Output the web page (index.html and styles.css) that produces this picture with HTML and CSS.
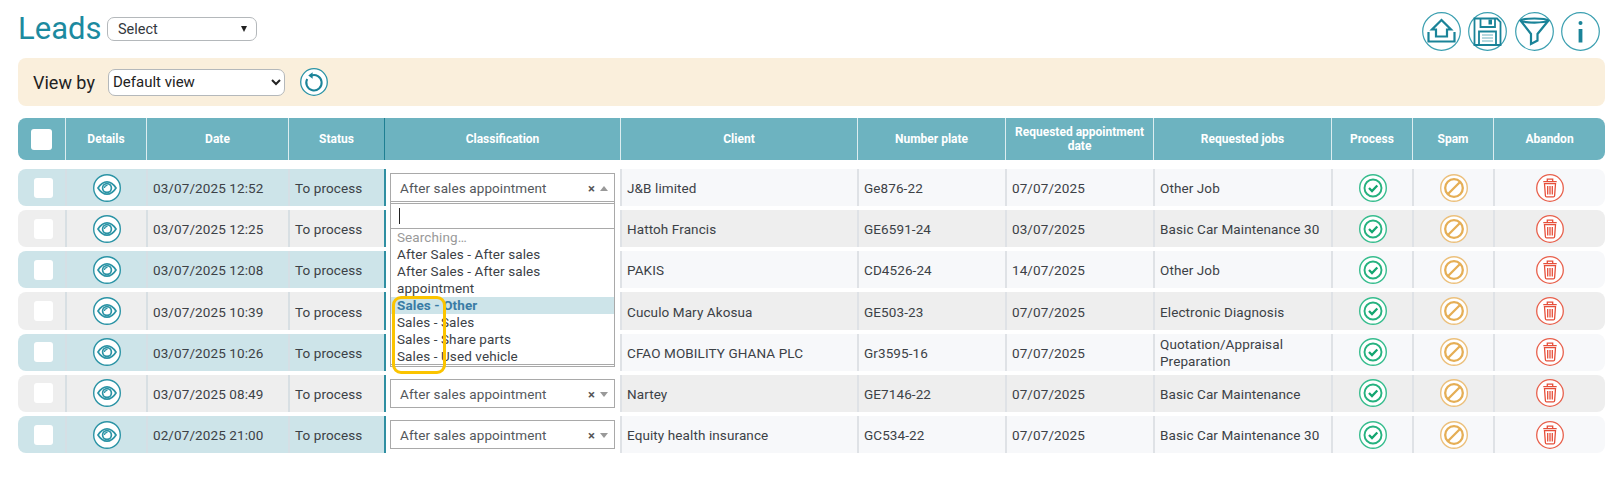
FILE: index.html
```html
<!DOCTYPE html>
<html lang="en">
<head>
<meta charset="utf-8">
<title>Leads</title>
<link rel="stylesheet" href="styles.css">
</head>
<body>
<svg class="defs" aria-hidden="true">
  <symbol id="i-eye" viewBox="0 0 28 28">
    <circle cx="14" cy="14" r="13.300" fill="#fff" stroke="#2a93a5" stroke-width="1.400"/>
    <path d="M5 14C8 9.200 11 7.800 14 7.800S20 9.200 23 14C20 18.800 17 20.200 14 20.200S8 18.800 5 14Z" fill="none" stroke="#2a93a5" stroke-width="1.700"/>
    <circle cx="14" cy="14" r="4.400" fill="none" stroke="#2a93a5" stroke-width="1.700"/>
    <path d="M11.500 14A2.800 2.800 0 0 1 14.500 11.300" fill="none" stroke="#2a93a5" stroke-width="1.200"/>
  </symbol>
  <symbol id="i-check" viewBox="0 0 28 28">
    <circle cx="14" cy="14" r="13.300" fill="#fff" stroke="#37bd8e" stroke-width="1.400"/>
    <circle cx="14" cy="14" r="8.500" fill="none" stroke="#25b27f" stroke-width="1.900"/>
    <path d="M10 14l3 3 5.300-5.500" fill="none" stroke="#12a56f" stroke-width="2.300"/>
  </symbol>
  <symbol id="i-ban" viewBox="0 0 28 28">
    <circle cx="14" cy="14" r="13.300" fill="#fff" stroke="#ecc07c" stroke-width="1.400"/>
    <circle cx="14" cy="14" r="8.800" fill="none" stroke="#e5ae55" stroke-width="2.300"/>
    <path d="M8 20L20 8" fill="none" stroke="#e5ae55" stroke-width="2.300"/>
  </symbol>
  <symbol id="i-trash" viewBox="0 0 28 28">
    <circle cx="14" cy="14" r="13.300" fill="#fff" stroke="#e8604c" stroke-width="1.300"/>
    <path d="M7.300 7.700H20.700M11.300 7.300V5.200H16.700V7.300M8.500 9.700H19.500L18.600 21.700Q18.500 22.800 17.400 22.800H10.600Q9.500 22.800 9.400 21.700ZM11.700 12V20.500M14 12V20.500M16.300 12V20.500" fill="none" stroke="#e64f3a" stroke-width="1.300"/>
  </symbol>
  <symbol id="i-home" viewBox="0 0 39 39">
    <circle cx="19.500" cy="19.500" r="18.800" fill="#fff" stroke="#3b9fb0" stroke-width="1.200"/>
    <path d="M19.500 8L10 17.500H14V24.500H25V17.500H29ZM6.500 20V29.500H32.500V20" fill="none" stroke="#1a8398" stroke-width="2.200"/>
  </symbol>
  <symbol id="i-save" viewBox="0 0 39 39">
    <circle cx="19.500" cy="19.500" r="18.800" fill="#fff" stroke="#3b9fb0" stroke-width="1.200"/>
    <path d="M6.500 6.500H29L32.500 10V33H6.500ZM12.500 6.500V15H27V6.500M11 33V19.500H28V33" fill="none" stroke="#1a8398" stroke-width="1.800"/>
    <path d="M20.500 7.500H24V12.500H20.500Z" fill="#1a8398"/>
    <path d="M14 23H25M14 26H25M14 29H25" fill="none" stroke="#6db3c0" stroke-width="1"/>
  </symbol>
  <symbol id="i-filter" viewBox="0 0 39 39">
    <circle cx="19.500" cy="19.500" r="18.800" fill="#fff" stroke="#3b9fb0" stroke-width="1.200"/>
    <path d="M5.500 8.500C9 5.800 30 5.800 33.500 8.500C30 11.200 9 11.200 5.500 8.500ZM5.500 8.500L16 22V32L22.500 28.500V22L33.500 8.500" fill="none" stroke="#1a8398" stroke-width="2.200"/>
  </symbol>
  <symbol id="i-info" viewBox="0 0 39 39">
    <circle cx="19.500" cy="19.500" r="18.800" fill="#fff" stroke="#3b9fb0" stroke-width="1.200"/>
    <circle cx="19.500" cy="11" r="2" fill="#1a8398"/>
    <path d="M19.500 17V30.500" fill="none" stroke="#1a8398" stroke-width="3.800"/>
  </symbol>
  <symbol id="i-refresh" viewBox="0 0 28 28">
    <circle cx="14" cy="14" r="13.300" fill="#fff" stroke="#2a93a5" stroke-width="1.300"/>
    <path d="M11 7.600A7.700 7.700 0 1 1 7.200 11" fill="none" stroke="#1a8398" stroke-width="2"/>
    <path d="M12.600 4.300V10.800L8.300 7.600Z" fill="#1a8398"/>
  </symbol>
</svg>

<header class="topbar">
  <div class="title-group">
    <h1 class="title">Leads</h1>
    <div class="fake-select"><span>Select</span><span class="fake-caret"></span></div>
  </div>
  <div class="tools">
    <svg class="tool"><use href="#i-home"/></svg>
    <svg class="tool"><use href="#i-save"/></svg>
    <svg class="tool"><use href="#i-filter"/></svg>
    <svg class="tool"><use href="#i-info"/></svg>
  </div>
</header>

<section class="viewbar">
  <label class="view-label" for="view">View by</label>
  <select class="view-select" id="view"><option>Default view</option></select>
  <svg class="refresh"><use href="#i-refresh"/></svg>
</section>

<section class="table">
  <div class="grid head">
    <div class="hc first"><span class="head-box"></span></div>
    <div class="hc">Details</div>
    <div class="hc">Date</div>
    <div class="hc">Status</div>
    <div class="hc classif">Classification</div>
    <div class="hc">Client</div>
    <div class="hc">Number plate</div>
    <div class="hc">Requested appointment date</div>
    <div class="hc">Requested jobs</div>
    <div class="hc">Process</div>
    <div class="hc">Spam</div>
    <div class="hc">Abandon</div>
  </div>

  <div class="rows">
    <div class="grid row teal">
      <div class="c lead first"><span class="box"></span></div>
      <div class="c lead mid"><svg class="ico"><use href="#i-eye"/></svg></div>
      <div class="c lead">03/07/2025 12:52</div>
      <div class="c lead">To process</div>
      <div class="c classif">
        <div class="s2 open"><span class="s2-text">After sales appointment</span><span class="s2-x">×</span><span class="s2-arrow"></span></div>
        <div class="drop">
          <div class="drop-search"><span class="cursor"></span></div>
          <ul class="drop-list">
            <li class="muted">Searching…</li>
            <li>After Sales - After sales</li>
            <li>After Sales - After sales appointment</li>
            <li class="active">Sales - Other</li>
            <li>Sales - Sales</li>
            <li>Sales - Share parts</li>
            <li>Sales - Used vehicle</li>
          </ul>
          <div class="mark"></div>
        </div>
      </div>
      <div class="c">J&amp;B limited</div>
      <div class="c">Ge876-22</div>
      <div class="c">07/07/2025</div>
      <div class="c">Other Job</div>
      <div class="c mid"><svg class="ico"><use href="#i-check"/></svg></div>
      <div class="c mid"><svg class="ico"><use href="#i-ban"/></svg></div>
      <div class="c mid last"><svg class="ico"><use href="#i-trash"/></svg></div>
    </div>

    <div class="grid row grey">
      <div class="c lead first"><span class="box"></span></div>
      <div class="c lead mid"><svg class="ico"><use href="#i-eye"/></svg></div>
      <div class="c lead">03/07/2025 12:25</div>
      <div class="c lead">To process</div>
      <div class="c classif"><div class="s2"></div></div>
      <div class="c">Hattoh Francis</div>
      <div class="c">GE6591-24</div>
      <div class="c">03/07/2025</div>
      <div class="c">Basic Car Maintenance 30</div>
      <div class="c mid"><svg class="ico"><use href="#i-check"/></svg></div>
      <div class="c mid"><svg class="ico"><use href="#i-ban"/></svg></div>
      <div class="c mid last"><svg class="ico"><use href="#i-trash"/></svg></div>
    </div>

    <div class="grid row teal">
      <div class="c lead first"><span class="box"></span></div>
      <div class="c lead mid"><svg class="ico"><use href="#i-eye"/></svg></div>
      <div class="c lead">03/07/2025 12:08</div>
      <div class="c lead">To process</div>
      <div class="c classif"><div class="s2"></div></div>
      <div class="c">PAKIS</div>
      <div class="c">CD4526-24</div>
      <div class="c">14/07/2025</div>
      <div class="c">Other Job</div>
      <div class="c mid"><svg class="ico"><use href="#i-check"/></svg></div>
      <div class="c mid"><svg class="ico"><use href="#i-ban"/></svg></div>
      <div class="c mid last"><svg class="ico"><use href="#i-trash"/></svg></div>
    </div>

    <div class="grid row grey">
      <div class="c lead first"><span class="box"></span></div>
      <div class="c lead mid"><svg class="ico"><use href="#i-eye"/></svg></div>
      <div class="c lead">03/07/2025 10:39</div>
      <div class="c lead">To process</div>
      <div class="c classif"><div class="s2"></div></div>
      <div class="c">Cuculo Mary Akosua</div>
      <div class="c">GE503-23</div>
      <div class="c">07/07/2025</div>
      <div class="c">Electronic Diagnosis</div>
      <div class="c mid"><svg class="ico"><use href="#i-check"/></svg></div>
      <div class="c mid"><svg class="ico"><use href="#i-ban"/></svg></div>
      <div class="c mid last"><svg class="ico"><use href="#i-trash"/></svg></div>
    </div>

    <div class="grid row teal">
      <div class="c lead first"><span class="box"></span></div>
      <div class="c lead mid"><svg class="ico"><use href="#i-eye"/></svg></div>
      <div class="c lead">03/07/2025 10:26</div>
      <div class="c lead">To process</div>
      <div class="c classif"><div class="s2"></div></div>
      <div class="c">CFAO MOBILITY GHANA PLC</div>
      <div class="c">Gr3595-16</div>
      <div class="c">07/07/2025</div>
      <div class="c">Quotation/Appraisal Preparation</div>
      <div class="c mid"><svg class="ico"><use href="#i-check"/></svg></div>
      <div class="c mid"><svg class="ico"><use href="#i-ban"/></svg></div>
      <div class="c mid last"><svg class="ico"><use href="#i-trash"/></svg></div>
    </div>

    <div class="grid row grey">
      <div class="c lead first"><span class="box"></span></div>
      <div class="c lead mid"><svg class="ico"><use href="#i-eye"/></svg></div>
      <div class="c lead">03/07/2025 08:49</div>
      <div class="c lead">To process</div>
      <div class="c classif"><div class="s2"><span class="s2-text">After sales appointment</span><span class="s2-x">×</span><span class="s2-arrow"></span></div></div>
      <div class="c">Nartey</div>
      <div class="c">GE7146-22</div>
      <div class="c">07/07/2025</div>
      <div class="c">Basic Car Maintenance</div>
      <div class="c mid"><svg class="ico"><use href="#i-check"/></svg></div>
      <div class="c mid"><svg class="ico"><use href="#i-ban"/></svg></div>
      <div class="c mid last"><svg class="ico"><use href="#i-trash"/></svg></div>
    </div>

    <div class="grid row teal">
      <div class="c lead first"><span class="box"></span></div>
      <div class="c lead mid"><svg class="ico"><use href="#i-eye"/></svg></div>
      <div class="c lead">02/07/2025 21:00</div>
      <div class="c lead">To process</div>
      <div class="c classif"><div class="s2"><span class="s2-text">After sales appointment</span><span class="s2-x">×</span><span class="s2-arrow"></span></div></div>
      <div class="c">Equity health insurance</div>
      <div class="c">GC534-22</div>
      <div class="c">07/07/2025</div>
      <div class="c">Basic Car Maintenance 30</div>
      <div class="c mid"><svg class="ico"><use href="#i-check"/></svg></div>
      <div class="c mid"><svg class="ico"><use href="#i-ban"/></svg></div>
      <div class="c mid last"><svg class="ico"><use href="#i-trash"/></svg></div>
    </div>
  </div>
</section>
</body>
</html>
```

FILE: styles.css
```css
* { box-sizing: border-box; }
html, body { margin: 0; background: #fff; }
body {
  padding: 12px 14px 0 18px;
  font-family: Roboto, "Liberation Sans", sans-serif;
  font-size: 13.500px;
  letter-spacing: 0.1px;
  color: #3c4146;
  overflow: hidden;
}
.defs { width: 0; height: 0; position: absolute; }

.topbar { display: flex; justify-content: space-between; height: 39px; padding-right: 5px; }
.title-group { display: flex; align-items: center; gap: 0; height: 34px; }
.title { width: 89px; margin: 0; font-size: 31px; font-weight: 400; letter-spacing: 0; color: #1c8a9f; line-height: 34px; }
.fake-select {
  display: flex; align-items: center; justify-content: space-between;
  width: 150px; height: 24px; padding: 0 9px 0 10px;
  border: 1px solid #b4b8bb; border-radius: 7px;
  font-size: 14.500px; letter-spacing: 0; color: #33383d;
}
.fake-caret { width: 0; height: 0; border: 3.500px solid transparent; border-top: 6px solid #222; border-bottom: 0; }
.tools { display: flex; gap: 7.500px; }
.tool { width: 39px; height: 39px; }

.viewbar {
  display: flex; align-items: center; height: 48px; margin-top: 7px; padding-left: 15px;
  background: #faefdc; border-radius: 8px;
}
.view-label { width: 75px; padding-top: 1px; font-size: 18px; letter-spacing: 0; color: #222; }
.view-select {
  width: 177px; height: 27px; padding: 0; background: #fff;
  border: 1px solid #b4b8bb; border-radius: 7px;
  font-family: Roboto, "Liberation Sans", sans-serif; font-size: 15px; letter-spacing: 0; color: #222;
}
.refresh { width: 28px; height: 28px; margin-left: 15px; }

.table { margin-top: 12px; }
.grid {
  display: grid;
  grid-template-columns: 47px 81px 142px 96px 236px 237px 148px 148px 178px 81px 81px 112px;
}
.head { height: 42px; background: #6db3c0; border-radius: 8px; color: #fff; font-weight: 700; font-size: 12px; letter-spacing: 0; }
.hc {
  display: flex; align-items: center; justify-content: center; text-align: center;
  padding: 0 8px; line-height: 14.500px; border-left: 1px solid #dcedf0;
}
.hc.first { border-left: 0; }
.hc.classif { border-left: 1px solid #1f7f92; }
.head-box { width: 21px; height: 21px; background: #fff; border-radius: 3px; }

.rows { display: flex; flex-direction: column; gap: 4px; margin-top: 9px; }
.row { height: 37.170px; }
.c {
  display: flex; align-items: center; min-width: 0; padding: 2px 5px 0; line-height: 17px;
  border-left: 2px solid #dfe2e6;
}
.teal .c { background: #f7f8fa; }
.grey .c { background: #eeeeee; }
.teal .lead { background: #cde4e9; border-left-color: #d5dfe5; }
.grey .lead { border-left-color: #d8dfe3; }
.c.first { border-left: 0; border-radius: 8px 0 0 8px; padding: 0 0 0 16px; }
.c.last { border-radius: 0 8px 8px 0; }
.c.mid { justify-content: center; padding: 0; }
.teal .c.classif, .grey .c.classif { position: relative; background: #fff; padding: 0 5px 0 4px; border-left-color: #2f8fa2; }
.box { width: 19px; height: 20px; background: #fff; border-radius: 3px; }
.ico { width: 28px; height: 28px; }

.s2 {
  display: flex; align-items: center; width: 100%; height: 29px; padding: 2px 6px 0 9px;
  background: #fff; border: 1px solid #a9a9a9; color: #54585c;
}
.s2-text { flex: 1; white-space: nowrap; }
.s2-x { font-weight: 700; font-size: 13px; color: #555; margin-right: 5px; }
.s2-arrow { width: 0; height: 0; border: 4px solid transparent; border-top: 5px solid #999; border-bottom: 0; }
.open .s2-arrow { border-top: 0; border-bottom: 5px solid #999; }

.drop {
  position: absolute; z-index: 5; left: 4px; top: 33px; width: 225px; height: 163px;
  background: #fff; border: 1px solid #a9a9a9; border-top: 0;
}
.drop-search { height: 26px; margin: 1px 0 0; border: 1px solid #a9a9a9; border-width: 1px 0; display: flex; align-items: center; padding-left: 8px; }
.cursor { width: 1px; height: 16px; background: #222; }
.drop-list { list-style: none; margin: 0; padding: 0; font-size: 13.500px; line-height: 17px; }
.drop-list li { padding: 0 6px; }
.drop-list .muted { color: #999; }
.drop-list .active { background: #cde4e9; color: #3a7ca5; font-weight: 700; }
.mark {
  position: absolute; left: 1px; top: 94px; width: 54px; height: 78px;
  border: 3.500px solid #fbc400; border-radius: 9px;
}
```
